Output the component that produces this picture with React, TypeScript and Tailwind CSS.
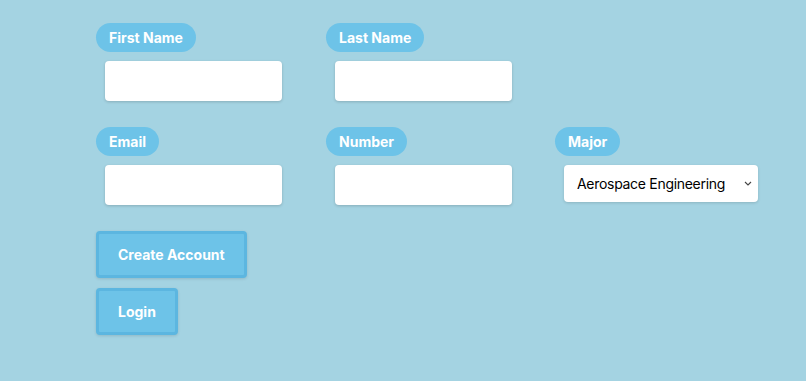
import React from "react";

function Field({ label, children }: { label: string; children: React.ReactNode }) {
  return (
    <div className="w-[230px] flex flex-col items-start">
      <div className="h-[29px] px-[13px] rounded-full bg-[#6dc3e8] text-white font-bold text-[14px] leading-[29px]">
        {label}
      </div>
      <div className="ml-[9px] mt-[9px]">{children}</div>
    </div>
  );
}

function Input() {
  return (
    <div className="w-[177px] h-[40px] bg-white rounded-[4px] shadow-[0_1px_3px_rgba(0,0,0,0.18)]" />
  );
}

export default function App() {
  return (
    <div
      className="w-[806px] h-[381px] bg-[#a4d3e2] pl-[96px] pt-[23px] flex flex-col"
      style={{ fontFamily: "Inter, 'Noto Sans', sans-serif" }}
    >
      <div className="flex">
        <Field label="First Name"><Input /></Field>
        <Field label="Last Name"><Input /></Field>
      </div>
      <div className="flex mt-[26px]">
        <Field label="Email"><Input /></Field>
        <Field label="Number"><Input /></Field>
        <div className="w-[230px] flex flex-col items-start -ml-[1px]">
          <div className="h-[29px] px-[13px] rounded-full bg-[#6dc3e8] text-white font-bold text-[14px] leading-[29px]">
            Major
          </div>
          <div className="ml-[9px] mt-[9px] w-[194px] h-[37px] bg-white rounded-[4px] shadow-[0_1px_3px_rgba(0,0,0,0.15)] flex items-center justify-between pl-[13px] pr-[6px]">
            <span className="text-[14px] tracking-[-0.3px] text-black whitespace-nowrap">Aerospace Engineering</span>
            <svg className="shrink-0" width="8" height="5" viewBox="0 0 8 5" fill="none">
              <path d="M1 1l3 3 3-3" stroke="#444" strokeWidth="1.1" />
            </svg>
          </div>
        </div>
      </div>
      <div className="flex flex-col items-start mt-[26px] gap-[10px]">
        <button className="h-[47px] px-[19px] border-[3px] border-[#5cb6e0] bg-[#6dc3e8] rounded-[4px] text-white font-bold text-[14px] shadow-[0_1px_3px_rgba(0,0,0,0.12)]">
          Create Account
        </button>
        <button className="h-[47px] px-[19px] border-[3px] border-[#5cb6e0] bg-[#6dc3e8] rounded-[4px] text-white font-bold text-[14px] shadow-[0_1px_3px_rgba(0,0,0,0.12)]">
          Login
        </button>
      </div>
    </div>
  );
}
